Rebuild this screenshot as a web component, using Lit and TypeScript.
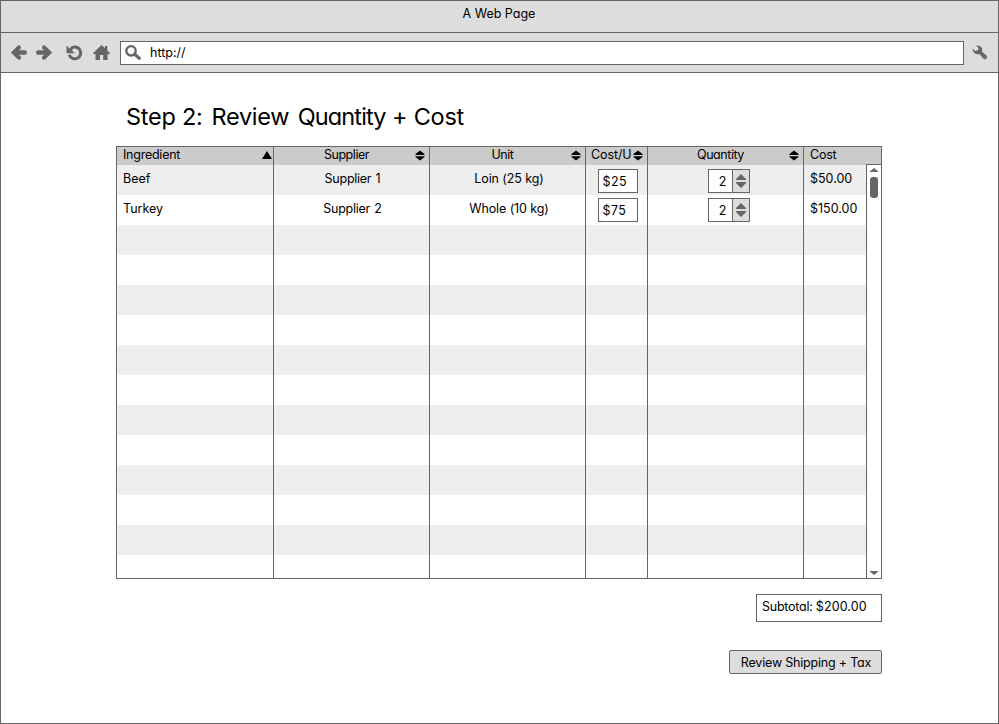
import { LitElement, html, css, svg } from "lit";
import { customElement, property } from "lit/decorators.js";

type Row = { ingredient: string; supplier: string; unit: string; price: string; qty: number; cost: string };

const rows: Row[] = [
  { ingredient: "Beef", supplier: "Supplier 1", unit: "Loin (25 kg)", price: "$25", qty: 2, cost: "$50.00" },
  { ingredient: "Turkey", supplier: "Supplier 2", unit: "Whole (10 kg)", price: "$75", qty: 2, cost: "$150.00" },
];

const blankRows = Array.from({ length: 12 });

const icons: Record<string, unknown> = {
  back: svg`<path d="M.8 7.500 8 .6Q10.500-.3 11 2.200V3.200L8.900 5.300H15.300Q17 5.500 17 7.500T15.300 9.700H8.900L11 11.800V13Q10.500 15.400 8 14.500z" fill="#666"/>`,
  forward: svg`<path d="M16.200 7.500 9 .6Q6.500-.3 6 2.200V3.200L8.100 5.300H1.700Q0 5.500 0 7.500T1.700 9.700H8.100L6 11.800V13Q6.500 15.400 9 14.500z" fill="#666"/>`,
  reload: svg`<path d="M5 3.400A5.900 5.900 0 1 1 3.200 9.800" fill="none" stroke="#666" stroke-width="3"/><path d="M.5.700v7.600h8.200L6.200 5.700 7 2.500 3.600 3.200z" fill="#666"/>`,
  home: svg`<path d="M8.500 0 0 8.200V9h2.500v6h4.500V10h3.200v5h4.400V9H17v-.8l-2.700-2.600V1h-2.300v2.300z" fill="#666"/>`,
  search: svg`<circle cx="6" cy="5.800" r="4.700" fill="none" stroke="#666" stroke-width="2.400"/><path d="M9.700 9.300l4.600 4" stroke="#666" stroke-width="3.200" stroke-linecap="round"/>`,
  wrench: svg`<path d="M4 .6Q8.500-.2 9.900 3 10.600 4.900 9.900 6.500L14.800 10.800Q15.600 12 14.700 13.300 13.400 14.900 11.800 13.900L7.200 9Q4.800 9.700 2.600 8.300.4 6.700.5 3.400L3.300 6 6 5.200 6.600 3.100z" fill="#666"/><circle cx="13.200" cy="12.500" r=".6" fill="#aaa"/>`,
};

@customElement("tool-icon")
class ToolIcon extends LitElement {
  @property() name = "back";
  static styles = css`
    :host { display: block; width: 17px; height: 16px; flex: none; }
    svg { display: block; overflow: visible; }
  `;
  render() {
    return html`<svg width="17" height="16" viewBox="0 0 17 16">${icons[this.name]}</svg>`;
  }
}

@customElement("app-root")
class AppRoot extends LitElement {
  static styles = css`
    :host {
      display: block;
      font: 12.5px/18px Inter, "Open Sans", sans-serif;
      font-feature-settings: "cv11", "ss03", "calt" 0;
      color: #000;
    }
    * { box-sizing: border-box; }
    svg { display: block; flex: none; }
    .window { width: 999px; height: 724px; border: 1px solid #666; background: #fff; display: flex; flex-direction: column; overflow: hidden; }
    .title { height: 32px; background: #ddd; border-bottom: 1px solid #666; text-align: center; padding: 4px 1px 0 0; flex: none; }
    .bar { height: 40px; background: #ddd; border-bottom: 1px solid #666; display: flex; align-items: center; padding-left: 9px; flex: none; }
    .forward { margin-left: 9px; }
    .reload { margin-left: 13px; }
    .home { margin-left: 10px; }
    .url { width: 844px; height: 24px; border: 1px solid #666; background: #fff; margin-left: 10px; display: flex; align-items: center; padding-left: 4px; }
    .http { margin-left: 8px; }
    .wrench { margin-left: 8px; }
    .page { width: 766px; margin-left: 115px; display: flex; flex-direction: column; }
    h1 { margin: 28px 0 0 10px; height: 45px; font-size: 23.5px; line-height: 32px; font-weight: 400; letter-spacing: -0.26px; white-space: nowrap; }
    .step { margin-right: 2.5px; }
    .review { margin-right: 2px; }
    .quantity { letter-spacing: -0.85px; }
    .table { position: relative; height: 433px; border: 1px solid #666; overflow: hidden; }
    .row { height: 30px; display: grid; grid-template-columns: 157px 156px 156px 62px 156px 77px; }
    .row:nth-child(even) { background: #eee; }
    .row.head { height: 18px; background: #cbcbcb; }
    .cell { border-right: 1px solid #666; position: relative; text-align: center; padding: 5px 0 0 2px; white-space: nowrap; }
    .cell:last-child { border-right: 0; }
    .supplier { letter-spacing: -0.25px; word-spacing: 1px; }
    .unit { letter-spacing: -0.1px; padding-left: 3px; }
    .head .cell { padding: 0 10px 0 0; line-height: 15px; letter-spacing: -0.45px; }
    .row .cell.left { text-align: left; padding-left: 6px; }
    .head .cell.left { letter-spacing: -0.25px; }
    .head .cell.price { text-align: left; padding-left: 5px; letter-spacing: -0.1px; }
    .sort { position: absolute; right: 4px; top: 3px; }
    .sort.up { right: 1px; top: 4px; }
    .row .cell.field { display: flex; justify-content: center; padding: 4px 0 0; }
    .row:nth-child(3) .cell.field { padding-top: 3px; }
    .price-box { width: 40px; height: 24px; border: 1px solid #666; background: #fff; text-align: left; padding-left: 4px; line-height: 23px; margin-left: 2px; letter-spacing: 0.4px; }
    .stepper { width: 42px; height: 24px; border: 1px solid #666; background: #fff; display: flex; margin-left: 6px; line-height: 23px; }
    .num { width: 23px; padding-left: 5px; }
    .arrows { width: 17px; border-left: 1px solid #666; background: #ddd; padding: 4px 0 0 3px; }
    .scroll { position: absolute; right: 0; top: 17px; bottom: 0; width: 15px; border-left: 1px solid #666; border-top: 1px solid #666; background: #fff; display: flex; flex-direction: column; align-items: center; padding: 3px 0 3px; }
    .thumb { width: 8px; height: 21px; border-radius: 3px; background: #666; margin-top: 5px; margin-bottom: auto; }
    .subtotal { align-self: flex-end; width: 126px; height: 28px; border: 1px solid #666; margin-top: 15px; padding: 3px 0 0 5px; letter-spacing: -0.25px; white-space: nowrap; }
    .amount { letter-spacing: 0.1px; }
    .button { align-self: flex-end; width: 153px; height: 24px; border: 1px solid #666; border-radius: 2px; background: #ddd; margin-top: 28px; padding: 1px 0 0 1px; font: inherit; line-height: 22px; color: #000; font-feature-settings: inherit; letter-spacing: -0.2px; white-space: nowrap; }
  `;

  sort() {
    return html`<svg class="sort" width="10" height="11" viewBox="0 0 10 11"><path d="M5 .5 9.500 4V5H.5V4zM.5 6.200h9V7L5 10.500.5 7z"/></svg>`;
  }

  render() {
    return html`
      <div class="window">
        <div class="title">A Web Page</div>
        <div class="bar">
          <tool-icon name="back"></tool-icon>
          <tool-icon class="forward" name="forward"></tool-icon>
          <tool-icon class="reload" name="reload"></tool-icon>
          <tool-icon class="home" name="home"></tool-icon>
          <div class="url"><tool-icon name="search"></tool-icon><span class="http">http://</span></div>
          <tool-icon class="wrench" name="wrench"></tool-icon>
        </div>
        <div class="page">
          <h1><span class="step">Step 2:</span> <span class="review">Review</span> <span class="quantity">Quantity</span> + Cost</h1>
          <div class="table">
            <div class="row head">
              <div class="cell left">Ingredient<svg class="sort up" width="10" height="8" viewBox="0 0 10 8"><path d="M5 0l5 8H0z"/></svg></div>
              <div class="cell">Supplier ${this.sort()}</div>
              <div class="cell">Unit ${this.sort()}</div>
              <div class="cell price">Cost/U${this.sort()}</div>
              <div class="cell">Quantity ${this.sort()}</div>
              <div class="cell left">Cost</div>
            </div>
            ${rows.map((r) => html`
              <div class="row">
                <div class="cell left">${r.ingredient}</div>
                <div class="cell supplier">${r.supplier}</div>
                <div class="cell unit">${r.unit}</div>
                <div class="cell field"><div class="price-box">${r.price}</div></div>
                <div class="cell field">
                  <div class="stepper">
                    <span class="num">${r.qty}</span>
                    <span class="arrows"><svg width="10" height="14" viewBox="0 0 10 14"><path d="M5 0l5 5v1H0V5zM0 8h10v1l-5 5-5-5z" fill="#666"/></svg></span>
                  </div>
                </div>
                <div class="cell left">${r.cost}</div>
              </div>`)}
            ${blankRows.map(() => html`<div class="row"><div class="cell"></div><div class="cell"></div><div class="cell"></div><div class="cell"></div><div class="cell"></div><div class="cell"></div></div>`)}
            <div class="scroll">
              <svg width="8" height="4" viewBox="0 0 8 4"><path d="M4 0l4 3.200V4H0v-.8z" fill="#666"/></svg>
              <div class="thumb"></div>
              <svg width="8" height="4" viewBox="0 0 8 4"><path d="M0 0h8v.8L4 4 0 .8z" fill="#666"/></svg>
            </div>
          </div>
          <div class="subtotal">Subtotal: <span class="amount">$200.00</span></div>
          <button class="button">Review Shipping + Tax</button>
        </div>
      </div>`;
  }
}
